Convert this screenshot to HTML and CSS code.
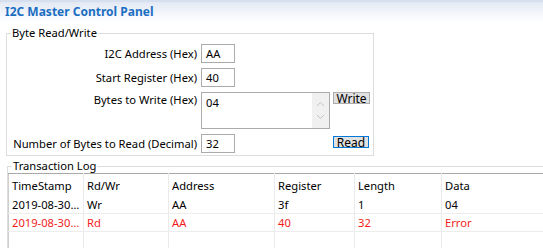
FILE: index.html
```html
<!DOCTYPE html>
<html lang="en">
<head>
  <meta charset="UTF-8">
  <title>I2C Master Control Panel</title>
  <link rel="stylesheet" href="styles.css">
</head>
<body>
  <div class="title-bar">I2C Master Control Panel</div>

  <fieldset class="group rw-group">
    <legend>Byte Read/Write</legend>
    <div class="form-grid">
      <label class="lbl">I2C Address (Hex)</label>
      <div class="field small">AA</div>
      <div></div>

      <label class="lbl">Start Register (Hex)</label>
      <div class="field small">40</div>
      <div></div>

      <label class="lbl lbl-top">Bytes to Write (Hex)</label>
      <div class="field area">
        <span class="area-text">04</span>
        <div class="scrollbar">
          <svg width="9" height="6" viewBox="0 0 9 6"><path d="M1 5 L4.5 1.5 L8 5" fill="none" stroke="#c4c4c4" stroke-width="1"/></svg>
          <svg width="9" height="6" viewBox="0 0 9 6"><path d="M1 1 L4.5 4.5 L8 1" fill="none" stroke="#c4c4c4" stroke-width="1"/></svg>
        </div>
      </div>
      <div class="btn-cell top"><button class="btn">Write</button></div>

      <label class="lbl">Number of Bytes to Read (Decimal)</label>
      <div class="field small">32</div>
      <div class="btn-cell"><button class="btn focused">Read</button></div>
    </div>
  </fieldset>

  <fieldset class="group log-group">
    <legend>Transaction Log</legend>
    <table class="log">
      <colgroup>
        <col style="width:75px"><col style="width:85px"><col style="width:106px">
        <col style="width:80px"><col style="width:87px"><col style="width:140px">
      </colgroup>
      <thead>
        <tr><th>TimeStamp</th><th>Rd/Wr</th><th>Address</th><th>Register</th><th>Length</th><th>Data</th></tr>
      </thead>
      <tbody>
        <tr><td>2019-08-30 14:21:07</td><td>Wr</td><td>AA</td><td>3f</td><td>1</td><td>04</td></tr>
        <tr class="err"><td>2019-08-30 14:21:12</td><td>Rd</td><td>AA</td><td>40</td><td>32</td><td>Error</td></tr>
        <tr><td></td><td></td><td></td><td></td><td></td><td></td></tr>
      </tbody>
    </table>
  </fieldset>
</body>
</html>
```

FILE: styles.css
```css
* {
  box-sizing: border-box;
}
body {
  margin: 0;
  font-family: "Noto Sans", "Open Sans", sans-serif;
  font-size: 11.2px;
  color: #000;
  background: #fff;
  overflow: hidden;
  width: 543px;
  height: 248px;
}
.title-bar {
  height: 22px;
  border-top: 2px solid #d6dfed;
  background: linear-gradient(#e3e9f4, #ffffff);
  padding: 1px 0 0 5px;
  font-weight: bold;
  font-size: 12px;
  color: #1b6ec2;
}
.group {
  border: 1px solid #dddddd;
  margin: 0;
  padding: 0;
}
.group legend {
  padding: 0 1px;
  margin-left: 4px;
  line-height: 14px;
}
.rw-group {
  width: 368px;
  margin: 4px 0 0 6px;
  height: 130px;
}
.form-grid {
  display: grid;
  grid-template-columns: 185px 129px 37px;
  column-gap: 4px;
  row-gap: 5px;
  padding: 4px 0 0 5px;
  align-items: center;
}
.form-grid > :nth-child(3n) {
  margin-left: -1px;
}
.lbl {
  text-align: right;
  white-space: nowrap;
}
.lbl-top {
  align-self: start;
}
.field {
  border: 1px solid #ababab;
  padding: 0 4px;
  line-height: 17px;
}
.small {
  width: 34px;
  height: 19px;
}
.area {
  height: 37px;
  display: flex;
  justify-content: space-between;
  padding-right: 0;
}
.area-text {
  padding-top: 1px;
}
.scrollbar {
  width: 17px;
  background: #f0f0f0;
  display: flex;
  flex-direction: column;
  align-items: center;
  justify-content: space-around;
  padding: 4px 0;
}
.btn-cell {
  align-self: end;
  padding-bottom: 5px;
}
.btn-cell.top {
  align-self: start;
  padding: 0;
}
.btn {
  display: block;
  width: 37px;
  height: 12px;
  padding: 0;
  border: 1px solid #adadad;
  background: #e1e1e1;
  font-family: inherit;
  font-size: 12px;
  line-height: 12px;
  color: #000;
  overflow: hidden;
}
.btn.focused {
  border-color: #0078d7;
  line-height: 11px;
  width: 36px;
}
.log-group {
  margin: 3px 0 0 7px;
  width: 600px;
  height: 90px;
}
.log {
  border-collapse: collapse;
  table-layout: fixed;
  width: 573px;
  border-top: 1px solid #a8a8a8;
  border-left: 1px solid #cfcfcf;
}
.log th, .log td {
  text-align: left;
  font-weight: normal;
  padding: 0 3px;
  white-space: nowrap;
  overflow: hidden;
  text-overflow: ellipsis;
  border-right: 1px solid #eaeaea;
}
.log th {
  height: 22px;
  padding-top: 2px;
}
.log td {
  height: 18px;
  border-bottom: 1px solid #ededed;
}
.log .err td {
  color: #f31c1c;
}
```
